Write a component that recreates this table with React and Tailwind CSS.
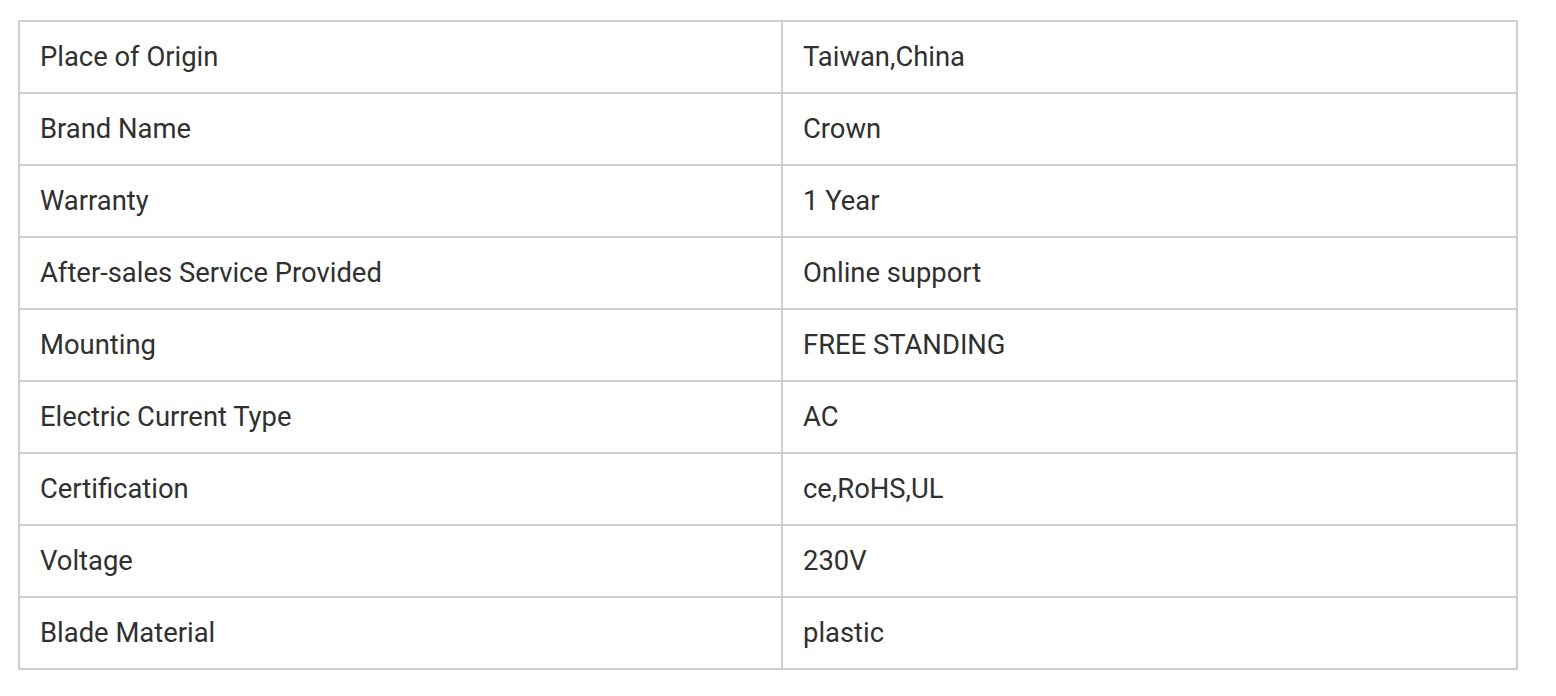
import React from 'react';

const rows = [
  ['Place of Origin', 'Taiwan,China'],
  ['Brand Name', 'Crown'],
  ['Warranty', '1 Year'],
  ['After-sales Service Provided', 'Online support'],
  ['Mounting', 'FREE STANDING'],
  ['Electric Current Type', 'AC'],
  ['Certification', 'ce,RoHS,UL'],
  ['Voltage', '230V'],
  ['Blade Material', 'plastic'],
];

const App = () => {
  return (
    <div className="min-h-screen bg-white pt-[20px] pl-[18px]" style={{ fontFamily: 'Roboto, "Liberation Sans", sans-serif' }}>
      <div className="w-[1500px] border-2 border-[#cfcfcf]">
        {rows.map(([label, value], i) => (
          <div key={label} className={i === 0 ? 'flex h-[70px]' : 'flex h-[72px] border-t-2 border-[#cfcfcf]'}>
            <div className="w-[761px] flex items-center px-[20px] pt-[2px] text-[27.4px] text-[#303030]">{label}</div>
            <div className="flex-1 flex items-center px-[20px] pt-[2px] text-[27.4px] text-[#303030] border-l-2 border-[#cfcfcf]">{value}</div>
          </div>
        ))}
      </div>
    </div>
  );
};

export default App;
